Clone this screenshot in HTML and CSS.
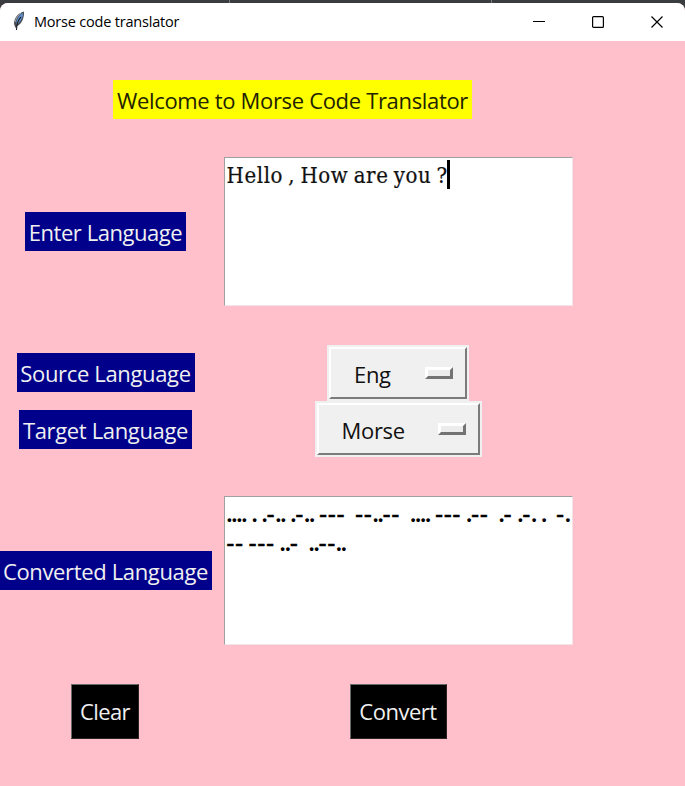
FILE: index.html
```html
<!DOCTYPE html>
<html lang="en">
<head>
<meta charset="utf-8">
<title>Morse code translator</title>
<link rel="stylesheet" href="styles.css">
</head>
<body>
<div class="backdrop">
<div class="window">
  <header class="titlebar">
    <svg class="feather" width="14" height="22" viewBox="0 0 14 22">
      <path d="M12 1.500C6 3 2 8 2 14l1.500 4 2-2c4-2 7-8 6.500-14.500z" fill="#4a4f55"/>
      <path d="M11 3C7 5 4 9 4.500 14.500l2.500-2c3-3 4-6 4-9.500z" fill="#5c8fd0"/>
      <path d="M9 7C6 10 4.500 14 4.500 20" fill="none" stroke="#20242a" stroke-width="1.1"/>
      <path d="M3.200 12C4 8 6 5 9 3" fill="none" stroke="#b9bec4" stroke-width=".8"/>
    </svg>
    <span class="title">Morse code translator</span>
    <div class="controls">
      <svg width="12" height="12" viewBox="0 0 12 12"><path d="M0 5.5h12" stroke="#000"/></svg>
      <svg width="12" height="12" viewBox="0 0 12 12"><rect x=".6" y=".6" width="10.8" height="10.8" rx="1" fill="none" stroke="#000" stroke-width="1.2"/></svg>
      <svg width="12" height="12" viewBox="0 0 12 12"><path d="M.5.5l11 11M11.5.5l-11 11" stroke="#000" stroke-width="1.2"/></svg>
    </div>
  </header>
  <main class="form">
    <h1 class="label heading">Welcome to Morse Code Translator</h1>
    <div class="label enter">Enter Language</div>
    <div class="textbox"><span class="entry">Hello , How are you ?</span><span class="caret"></span></div>
    <div class="label source">Source Language</div>
    <div class="menu menu-source"><div class="menu-face"><span class="option">Eng</span><span class="indicator"></span></div></div>
    <div class="label target">Target Language</div>
    <div class="menu menu-target"><div class="menu-face"><span class="option">Morse</span><span class="indicator"></span></div></div>
    <div class="label converted">Converted Language</div>
    <div class="textbox output">
      <div class="morse">.... . .<i>-</i>.. .<i>-</i>.. <i>---</i>  <i>--</i>..<i>--</i>  .... <i>---</i> .<i>--</i>  .<i>-</i> .<i>-</i>. .  <i>-</i>.</div>
      <div class="morse"><i>--</i> <i>---</i> ..<i>-</i>  ..<i>--</i>..</div>
    </div>
    <button class="button clear">Clear</button>
    <button class="button convert">Convert</button>
  </main>
</div>
</div>
</body>
</html>
```
FILE: styles.css
```css
* { box-sizing: border-box; }
body { margin: 0; font-family: "Open Sans", "Noto Sans", sans-serif; }
.backdrop {
  height: 786px;
  padding-top: 3px;
  background: linear-gradient(90deg, #3a3d40 229px, #777 229px 230px, #3a3d40 230px 491px, #777 491px 492px, #3a3d40 492px);
}
.window { height: 783px; background: pink; border-radius: 8px 8px 0 0; overflow: hidden; }
.titlebar { height: 38px; background: #fff; display: flex; align-items: center; padding: 0 22px 2px 12px; }
.feather { display: block; }
.title { margin-left: 8px; font-size: 14.5px; letter-spacing: -0.2px; color: #000; white-space: nowrap; }
.controls { margin-left: auto; display: flex; gap: 47px; padding-top: 2px; }
.form {
  display: grid;
  grid-template-columns: 211px 374px;
  grid-template-rows: 116px 149px 39px 56px 56px 39px 149px 39px 55px;
  justify-items: center;
  align-items: center;
}
.label {
  height: 39px;
  margin: 0;
  grid-column: 1;
  background: #00008b;
  color: #f0f0f0;
  font-size: 22px;
  font-weight: 400;
  line-height: 40px;
  letter-spacing: -0.35px;
  text-align: center;
  white-space: nowrap;
}
.heading { grid-column: 1 / 3; width: 359px; background: #ff0; color: #222200; letter-spacing: -0.33px; }
.enter { width: 161px; letter-spacing: -0.45px; }
.source { grid-row: 4; width: 178px; margin-bottom: 2px; }
.target { grid-row: 5; width: 173px; }
.converted { grid-row: 7; width: 212px; }
.textbox {
  grid-column: 2;
  width: 349px;
  height: 149px;
  display: flex;
  padding: 2px;
  background: #fff;
  border: 1px solid #f3e4e6;
  border-top-color: #a0a0a0;
  border-left-color: #a0a0a0;
}
.entry { width: 220px; font-family: "DejaVu Serif Condensed", "DejaVu Serif", serif; font-stretch: condensed; font-size: 22px; line-height: 32px; letter-spacing: .62px; word-spacing: -1.7px; color: #111; -webkit-text-stroke: .2px #111; white-space: nowrap; }
.caret { width: 3px; height: 29px; background: #000; }
.output { grid-row: 7; flex-direction: column; padding-top: 3px; }
.morse { height: 29px; font: bold 23px/29px "Liberation Serif", serif; letter-spacing: -.72px; white-space: pre; color: #000; }
.morse i { font-style: normal; letter-spacing: 1px; -webkit-text-stroke: .5px #000; }
.menu { grid-column: 2; height: 56px; padding: 2px; background: #f0f0f0; }
.menu-source { grid-row: 4; width: 142px; }
.menu-target { grid-row: 5; width: 167px; }
.menu-face {
  height: 52px;
  display: flex;
  align-items: center;
  justify-content: space-between;
  padding: 0 12px 0 23px;
  border: 2px solid;
  border-color: #fff #7b7b7b #7b7b7b #fff;
  font-size: 22px;
  letter-spacing: -0.3px;
  color: #111;
}
.option { padding-top: 1px; }
.indicator { width: 28px; height: 12px; border: 3px solid; border-color: #fff #737373 #737373 #fff; background: #ececec; }
.button {
  grid-row: 9;
  height: 55px;
  padding: 0 0 2px;
  border: 1px solid;
  border-color: #696969 #2b2222 #2b2222 #696969;
  border-radius: 0;
  background: #000;
  color: #f0f0f0;
  font: 22px "Open Sans", "Noto Sans", sans-serif;
  letter-spacing: -0.5px;
}
.clear { width: 68px; margin-right: 1px; letter-spacing: -0.6px; }
.convert { width: 97px; }
```
